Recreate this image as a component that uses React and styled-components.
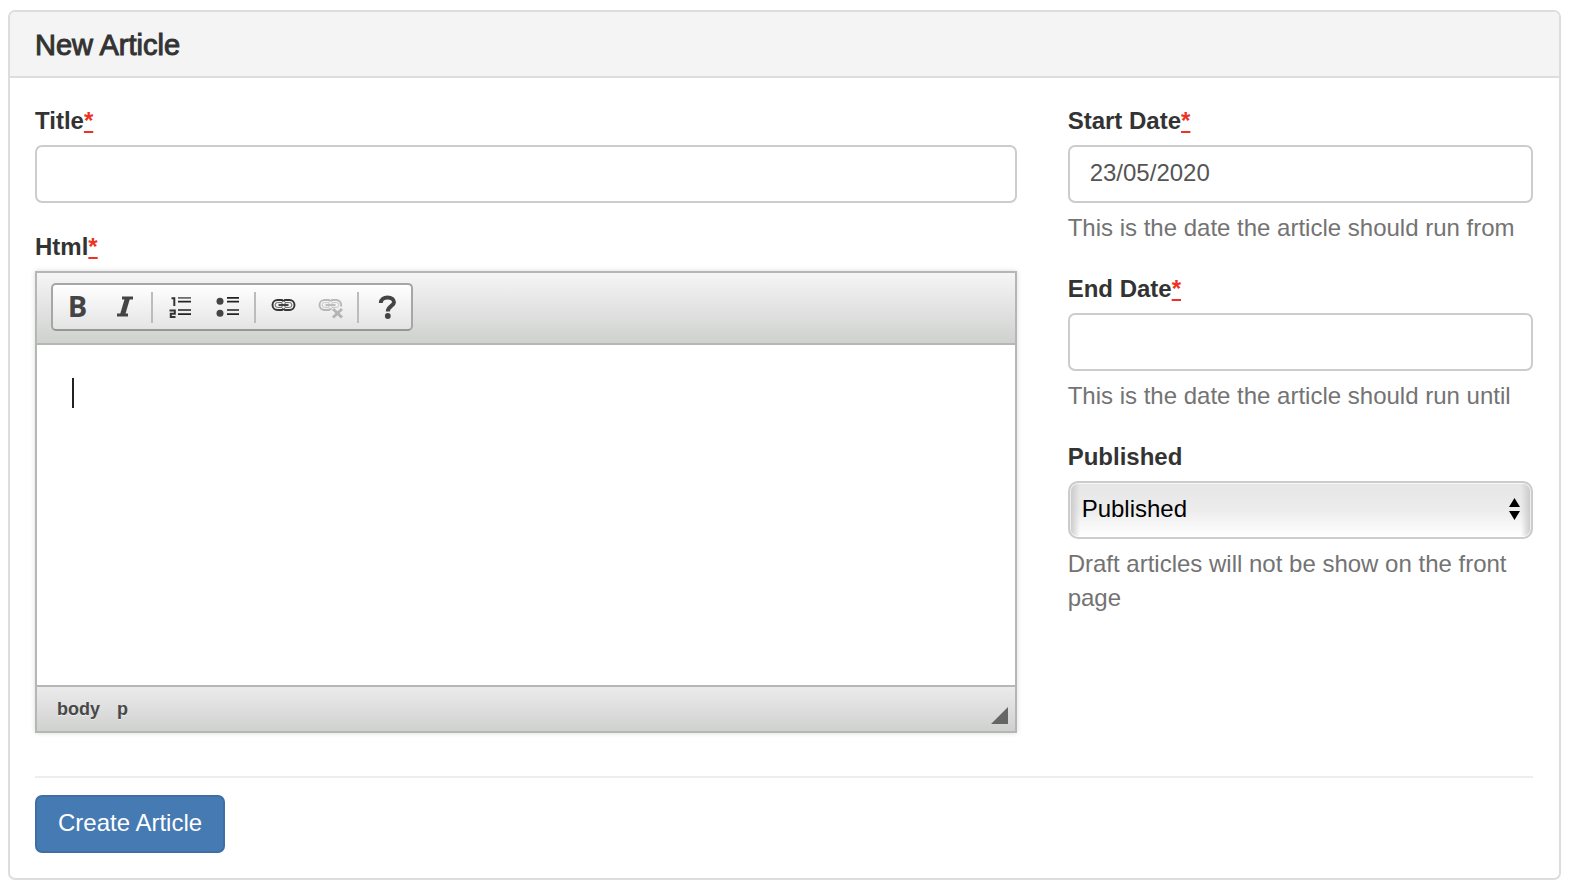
import React, {useState} from "react";
import styled, {createGlobalStyle} from "styled-components";

const GlobalStyle = createGlobalStyle`
  * {
    box-sizing: border-box;
  }

  body {
    margin: 0;
    background: #fff;
    color: #333;
    font-family: "Liberation Sans", Arial, sans-serif;
    font-size: 24px;
    line-height: 34px;
  }

  input, select, textarea, button {
    font-family: inherit;
    font-size: inherit;
    line-height: inherit;
  }
`

const Page = styled.main`
  padding: 10px 13px 10px 8px;
`

const Panel = styled.form`
  border: 2px solid #ddd;
  border-radius: 7px;
  background: #fff;
`

const PanelHeader = styled.header`
  padding: 17px 25px 15px;
  border-bottom: 2px solid #ddd;
  border-radius: 5px 5px 0 0;
  background: #f4f4f4;
`

// there is no medium weight in the font, a thin outline thickens the regular one
const PanelTitle = styled.h1`
  margin: 0;
  font-size: 29px;
  font-weight: normal;
  line-height: 32px;
  -webkit-text-stroke: 1px #333;
`

const PanelBody = styled.div`
  padding: 26px 26px 25px 25px;
`

const Columns = styled.div`
  display: grid;
  grid-template-columns: repeat(12, 1fr);
  column-gap: 51px;
`

const Column = styled.div`
  grid-column: span ${(props) => props.$span};
  display: flex;
  flex-direction: column;
  gap: 27px;
  min-width: 0;
`

const Group = styled.div`
  display: flex;
  flex-direction: column;
`

const Label = styled.label`
  margin-bottom: 7px;
  font-weight: bold;
`

const Required = styled.abbr`
  color: #ec3323;
  text-decoration: underline;
  text-decoration-thickness: 2px;
  text-underline-offset: 2px;
`

const TextInput = styled.input`
  width: 100%;
  height: 58px;
  padding: 9px 20px 11px;
  border: 2px solid #ccc;
  border-radius: 7px;
  background: #fff;
  color: #555;
  outline: none;
`

const HelpText = styled.p`
  margin: 8px 0 0;
  color: #737373;
`

const SelectWrap = styled.div`
  position: relative;
`

const Select = styled.select`
  display: block;
  width: 100%;
  height: 58px;
  padding: 0 40px 2px 12px;
  border: 2px solid #ccc;
  border-radius: 10px;
  background:
    linear-gradient(to right, #c8c8c8, rgba(200, 200, 200, 0) 10px, rgba(200, 200, 200, 0) calc(100% - 10px), #c8c8c8),
    linear-gradient(#e6e6e6, #ececec 50%, #fff);
  box-shadow: inset 0 0 0 1px rgba(255, 255, 255, 0.7);
  color: #000;
  appearance: none;
  outline: none;
`

const SelectArrows = styled.svg`
  position: absolute;
  top: 17px;
  right: 13px;
  pointer-events: none;
`

const Editor = styled.div`
  border: 2px solid #b6b6b6;
  box-shadow: 0 0 5px rgba(0, 0, 0, 0.15);
`

const EditorTop = styled.div`
  display: flex;
  padding: 10px 14px 12px;
  border-bottom: 2px solid #b6b6b6;
  background: linear-gradient(#f5f5f5, #cfd1cf);
`

const Toolbar = styled.div`
  display: flex;
  align-items: center;
  height: 48px;
  padding: 0 1px;
  border: 2px solid #a6a6a6;
  border-bottom-color: #979797;
  border-radius: 5px;
  background: linear-gradient(#fff, #e4e4e4);
`

const ToolButton = styled.button`
  display: flex;
  align-items: center;
  justify-content: center;
  width: 47px;
  height: 44px;
  padding: 0;
  border: 0;
  background: none;
  opacity: ${(props) => (props.disabled ? 0.3 : 1)};
`

const Letter = styled.span`
  padding-bottom: 2px;
  color: #444;
  font-family: "Open Sans", sans-serif;
  font-size: 29px;
  font-weight: bold;
`

const Separator = styled.span`
  width: 2px;
  height: 31px;
  margin: 0 4px 0 3px;
  background: #bcbcbc;
`

const Writing = styled.div`
  position: relative;
`

const TextArea = styled.textarea`
  display: block;
  width: 100%;
  height: 340px;
  padding: 32px 35px;
  border: 0;
  background: #fff;
  color: #333;
  resize: none;
  outline: none;
`

const Caret = styled.span`
  position: absolute;
  top: 33px;
  left: 35px;
  width: 2px;
  height: 30px;
  background: #222;
  pointer-events: none;
`

const EditorBottom = styled.div`
  display: flex;
  align-items: flex-end;
  justify-content: space-between;
  height: 46px;
  padding: 0 7px 7px 20px;
  border-top: 2px solid #b6b6b6;
  background: linear-gradient(#ebebeb, #cfd1cf);
`

const ElementPath = styled.div`
  display: flex;
  gap: 17px;
  padding-bottom: 3px;
`

const PathLink = styled.a`
  color: #484848;
  font-size: 18px;
  font-weight: bold;
  line-height: 24px;
  text-decoration: none;
  text-shadow: 0 1px 0 rgba(255, 255, 255, 0.5);
`

const Divider = styled.hr`
  margin: 43px 0 17px;
  border: 0;
  border-top: 2px solid #eee;
`

const SubmitButton = styled.button`
  height: 58px;
  padding: 0 21px 2px;
  border: 2px solid #3e6ea3;
  border-radius: 7px;
  background: #457ab3;
  color: #fff;
`

const ItalicIcon = () => (
    <svg width="18" height="24" viewBox="0 0 18 24" fill="none" stroke="#444">
        <path d="M6 3H17M1 20H12" strokeWidth="3"/>
        <path d="M11.5 3L6.5 20" strokeWidth="5"/>
    </svg>
)

const NumberedListIcon = () => (
    <svg width="23" height="24" viewBox="0 0 23 24" fill="none" stroke="#222" strokeWidth="1.7">
        <path d="M2.5 3.3H5.3V11M0.5 15.5H5.8V18.7H1.8V22H6.5" stroke="#333" strokeWidth="2"/>
        <path d="M9 2.9H22" stroke="#666"/>
        <path d="M9 6.7H22M9 15H22M9 19.2H22"/>
    </svg>
)

const BulletListIcon = () => (
    <svg width="23" height="24" viewBox="0 0 23 24" fill="none" stroke="#222" strokeWidth="1.7">
        <circle cx="4" cy="6.3" r="3.5" fill="#444" stroke="none"/>
        <circle cx="4" cy="18.3" r="3.5" fill="#444" stroke="none"/>
        <path d="M11 2.9H23M11 6.7H23M11 15H23M11 19.2H23"/>
    </svg>
)

const LinkIcon = ({broken}) => (
    <svg width="25" height="24" viewBox="0 0 25 24" fill="none" stroke="#333" strokeWidth="1.9">
        <path d="M12.5 6.2L11 5H6.5A5 5 0 0 0 6.5 15H11L12.5 13.8"/>
        <path d={broken ? "M12.5 6.2L14 5H18.5A5 5 0 0 1 23 11.5M12.5 13.8L13.5 14.6" : "M12.5 6.2L14 5H18.5A5 5 0 0 1 18.5 15H14L12.5 13.8"}/>
        <path d="M11 7.6H6.5A2.4 2.4 0 0 0 6.5 12.4H11V7.6M14 7.6H18.5A2.4 2.4 0 0 1 18.5 12.4H14V7.6" stroke="#666" strokeWidth="1"/>
        <path d="M7.5 10H17.5" strokeWidth="1.8"/>
        {broken && <path d="M15 14L24 22.5M24 14L15 22.5" strokeWidth="3"/>}
    </svg>
)

const HelpIcon = () => (
    <svg width="20" height="24" viewBox="0 0 20 24" fill="none" stroke="#444" strokeWidth="4">
        <path d="M3.8 8C3.8 4.2 7 2.5 10.5 2.5C14.5 2.5 17 4.3 17 7.3C17 11 10.8 11 10.8 16.5"/>
        <circle cx="10.8" cy="21" r="2.9" fill="#444" stroke="none"/>
    </svg>
)

const RequiredMark = () => <Required title="required">*</Required>

const App = () => {
    const [title, setTitle] = useState("")
    const [html, setHtml] = useState("")
    const [startDate, setStartDate] = useState("23/05/2020")
    const [endDate, setEndDate] = useState("")
    const [published, setPublished] = useState("published")

    return (
        <Page>
            <GlobalStyle/>
            <Panel onSubmit={(e) => e.preventDefault()}>
                <PanelHeader>
                    <PanelTitle>New Article</PanelTitle>
                </PanelHeader>
                <PanelBody>
                    <Columns>
                        <Column $span={8}>
                            <Group>
                                <Label htmlFor="title">Title<RequiredMark/></Label>
                                <TextInput id="title" value={title} onChange={(e) => setTitle(e.target.value)}/>
                            </Group>
                            <Group>
                                <Label htmlFor="html">Html<RequiredMark/></Label>
                                <Editor>
                                    <EditorTop>
                                        <Toolbar role="toolbar" aria-label="Formatting">
                                            <ToolButton type="button" aria-label="Bold"><Letter>B</Letter></ToolButton>
                                            <ToolButton type="button" aria-label="Italic"><ItalicIcon/></ToolButton>
                                            <Separator/>
                                            <ToolButton type="button" aria-label="Numbered list"><NumberedListIcon/></ToolButton>
                                            <ToolButton type="button" aria-label="Bulleted list"><BulletListIcon/></ToolButton>
                                            <Separator/>
                                            <ToolButton type="button" aria-label="Link"><LinkIcon/></ToolButton>
                                            <ToolButton type="button" aria-label="Unlink" disabled><LinkIcon broken/></ToolButton>
                                            <Separator/>
                                            <ToolButton type="button" aria-label="Help"><HelpIcon/></ToolButton>
                                        </Toolbar>
                                    </EditorTop>
                                    <Writing>
                                        <TextArea id="html" value={html} onChange={(e) => setHtml(e.target.value)}/>
                                        {html === "" && <Caret/>}
                                    </Writing>
                                    <EditorBottom>
                                        <ElementPath>
                                            <PathLink href="#body">body</PathLink>
                                            <PathLink href="#p">p</PathLink>
                                        </ElementPath>
                                        <svg width="17" height="17" viewBox="0 0 17 17">
                                            <path d="M17 0V17H0Z" fill="#666"/>
                                        </svg>
                                    </EditorBottom>
                                </Editor>
                            </Group>
                        </Column>
                        <Column $span={4}>
                            <Group>
                                <Label htmlFor="start-date">Start Date<RequiredMark/></Label>
                                <TextInput id="start-date" value={startDate} onChange={(e) => setStartDate(e.target.value)}/>
                                <HelpText>This is the date the article should run from</HelpText>
                            </Group>
                            <Group>
                                <Label htmlFor="end-date">End Date<RequiredMark/></Label>
                                <TextInput id="end-date" value={endDate} onChange={(e) => setEndDate(e.target.value)}/>
                                <HelpText>This is the date the article should run until</HelpText>
                            </Group>
                            <Group>
                                <Label htmlFor="published">Published</Label>
                                <SelectWrap>
                                    <Select id="published" value={published} onChange={(e) => setPublished(e.target.value)}>
                                        <option value="published">Published</option>
                                        <option value="draft">Draft</option>
                                    </Select>
                                    <SelectArrows width="11" height="22" viewBox="0 0 11 22">
                                        <path d="M5.5 0L11 9H0ZM5.5 22L11 13H0Z" fill="#000"/>
                                    </SelectArrows>
                                </SelectWrap>
                                <HelpText>Draft articles will not be show on the front page</HelpText>
                            </Group>
                        </Column>
                    </Columns>
                    <Divider/>
                    <SubmitButton type="submit">Create Article</SubmitButton>
                </PanelBody>
            </Panel>
        </Page>
    )
}

export default App
